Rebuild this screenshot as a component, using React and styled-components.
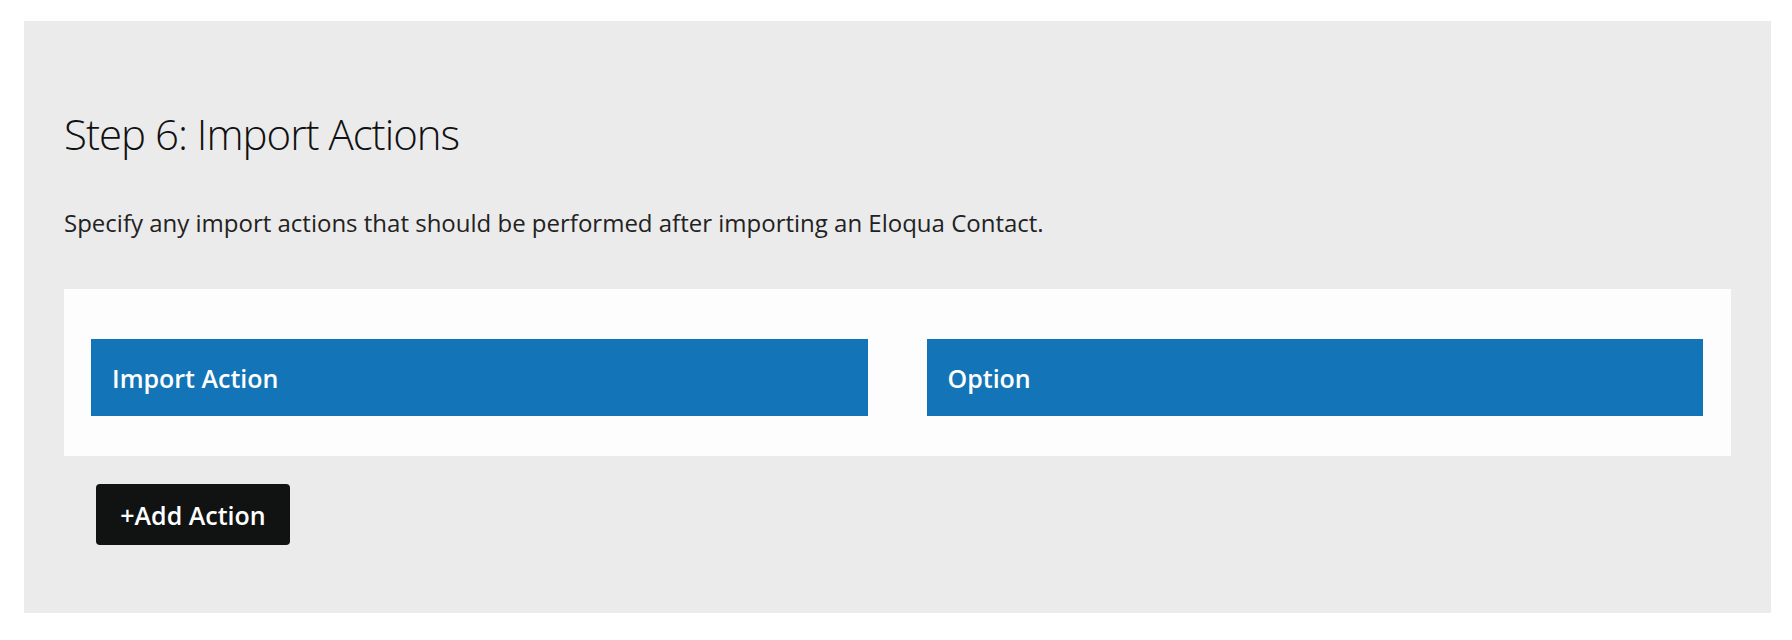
import React from "react";
import styled, { createGlobalStyle } from "styled-components";

const GlobalStyle = createGlobalStyle`
  body {
    margin: 0;
    background: #ffffff;
    font-family: "Open Sans", "Liberation Sans", sans-serif;
  }
`;

const Page = styled.div`
  padding: 21px 21px 27px 24px;
`;

const Section = styled.section`
  background: #ebebeb;
  height: 592px;
  box-sizing: border-box;
  padding: 0 40px;
  display: flex;
  flex-direction: column;
`;

const Title = styled.h1`
  margin: 84px 0 0 0;
  font-size: 42px;
  line-height: 58px;
  font-weight: 300;
  color: #111111;
  letter-spacing: -1px;
`;

const Lead = styled.p`
  margin: 45px 0 0 0;
  font-size: 24px;
  line-height: 30px;
  color: #222222;
`;

const Panel = styled.div`
  margin-top: 51px;
  background: #fdfdfd;
  padding: 50px 28px 40px 27px;
  display: grid;
  grid-template-columns: 1fr 1fr;
  column-gap: 59px;
`;

const HeaderCell = styled.div`
  height: 77px;
  background: #1375b7;
  color: #ffffff;
  display: flex;
  align-items: center;
  padding-left: 21px;
  font-size: 25px;
  font-weight: 600;
`;

const AddButton = styled.button`
  align-self: flex-start;
  margin: 28px 0 0 32px;
  width: 194px;
  height: 61px;
  border: none;
  border-radius: 4px;
  background: #111313;
  color: #ffffff;
  font-family: inherit;
  font-size: 25px;
  font-weight: 600;
  cursor: pointer;
`;

export default function App() {
  return (
    <>
      <GlobalStyle />
      <Page>
        <Section>
          <Title>Step 6: Import Actions</Title>
          <Lead>
            Specify any import actions that should be performed after importing
            an Eloqua Contact.
          </Lead>
          <Panel>
            <HeaderCell>Import Action</HeaderCell>
            <HeaderCell>Option</HeaderCell>
          </Panel>
          <AddButton>+Add Action</AddButton>
        </Section>
      </Page>
    </>
  );
}
